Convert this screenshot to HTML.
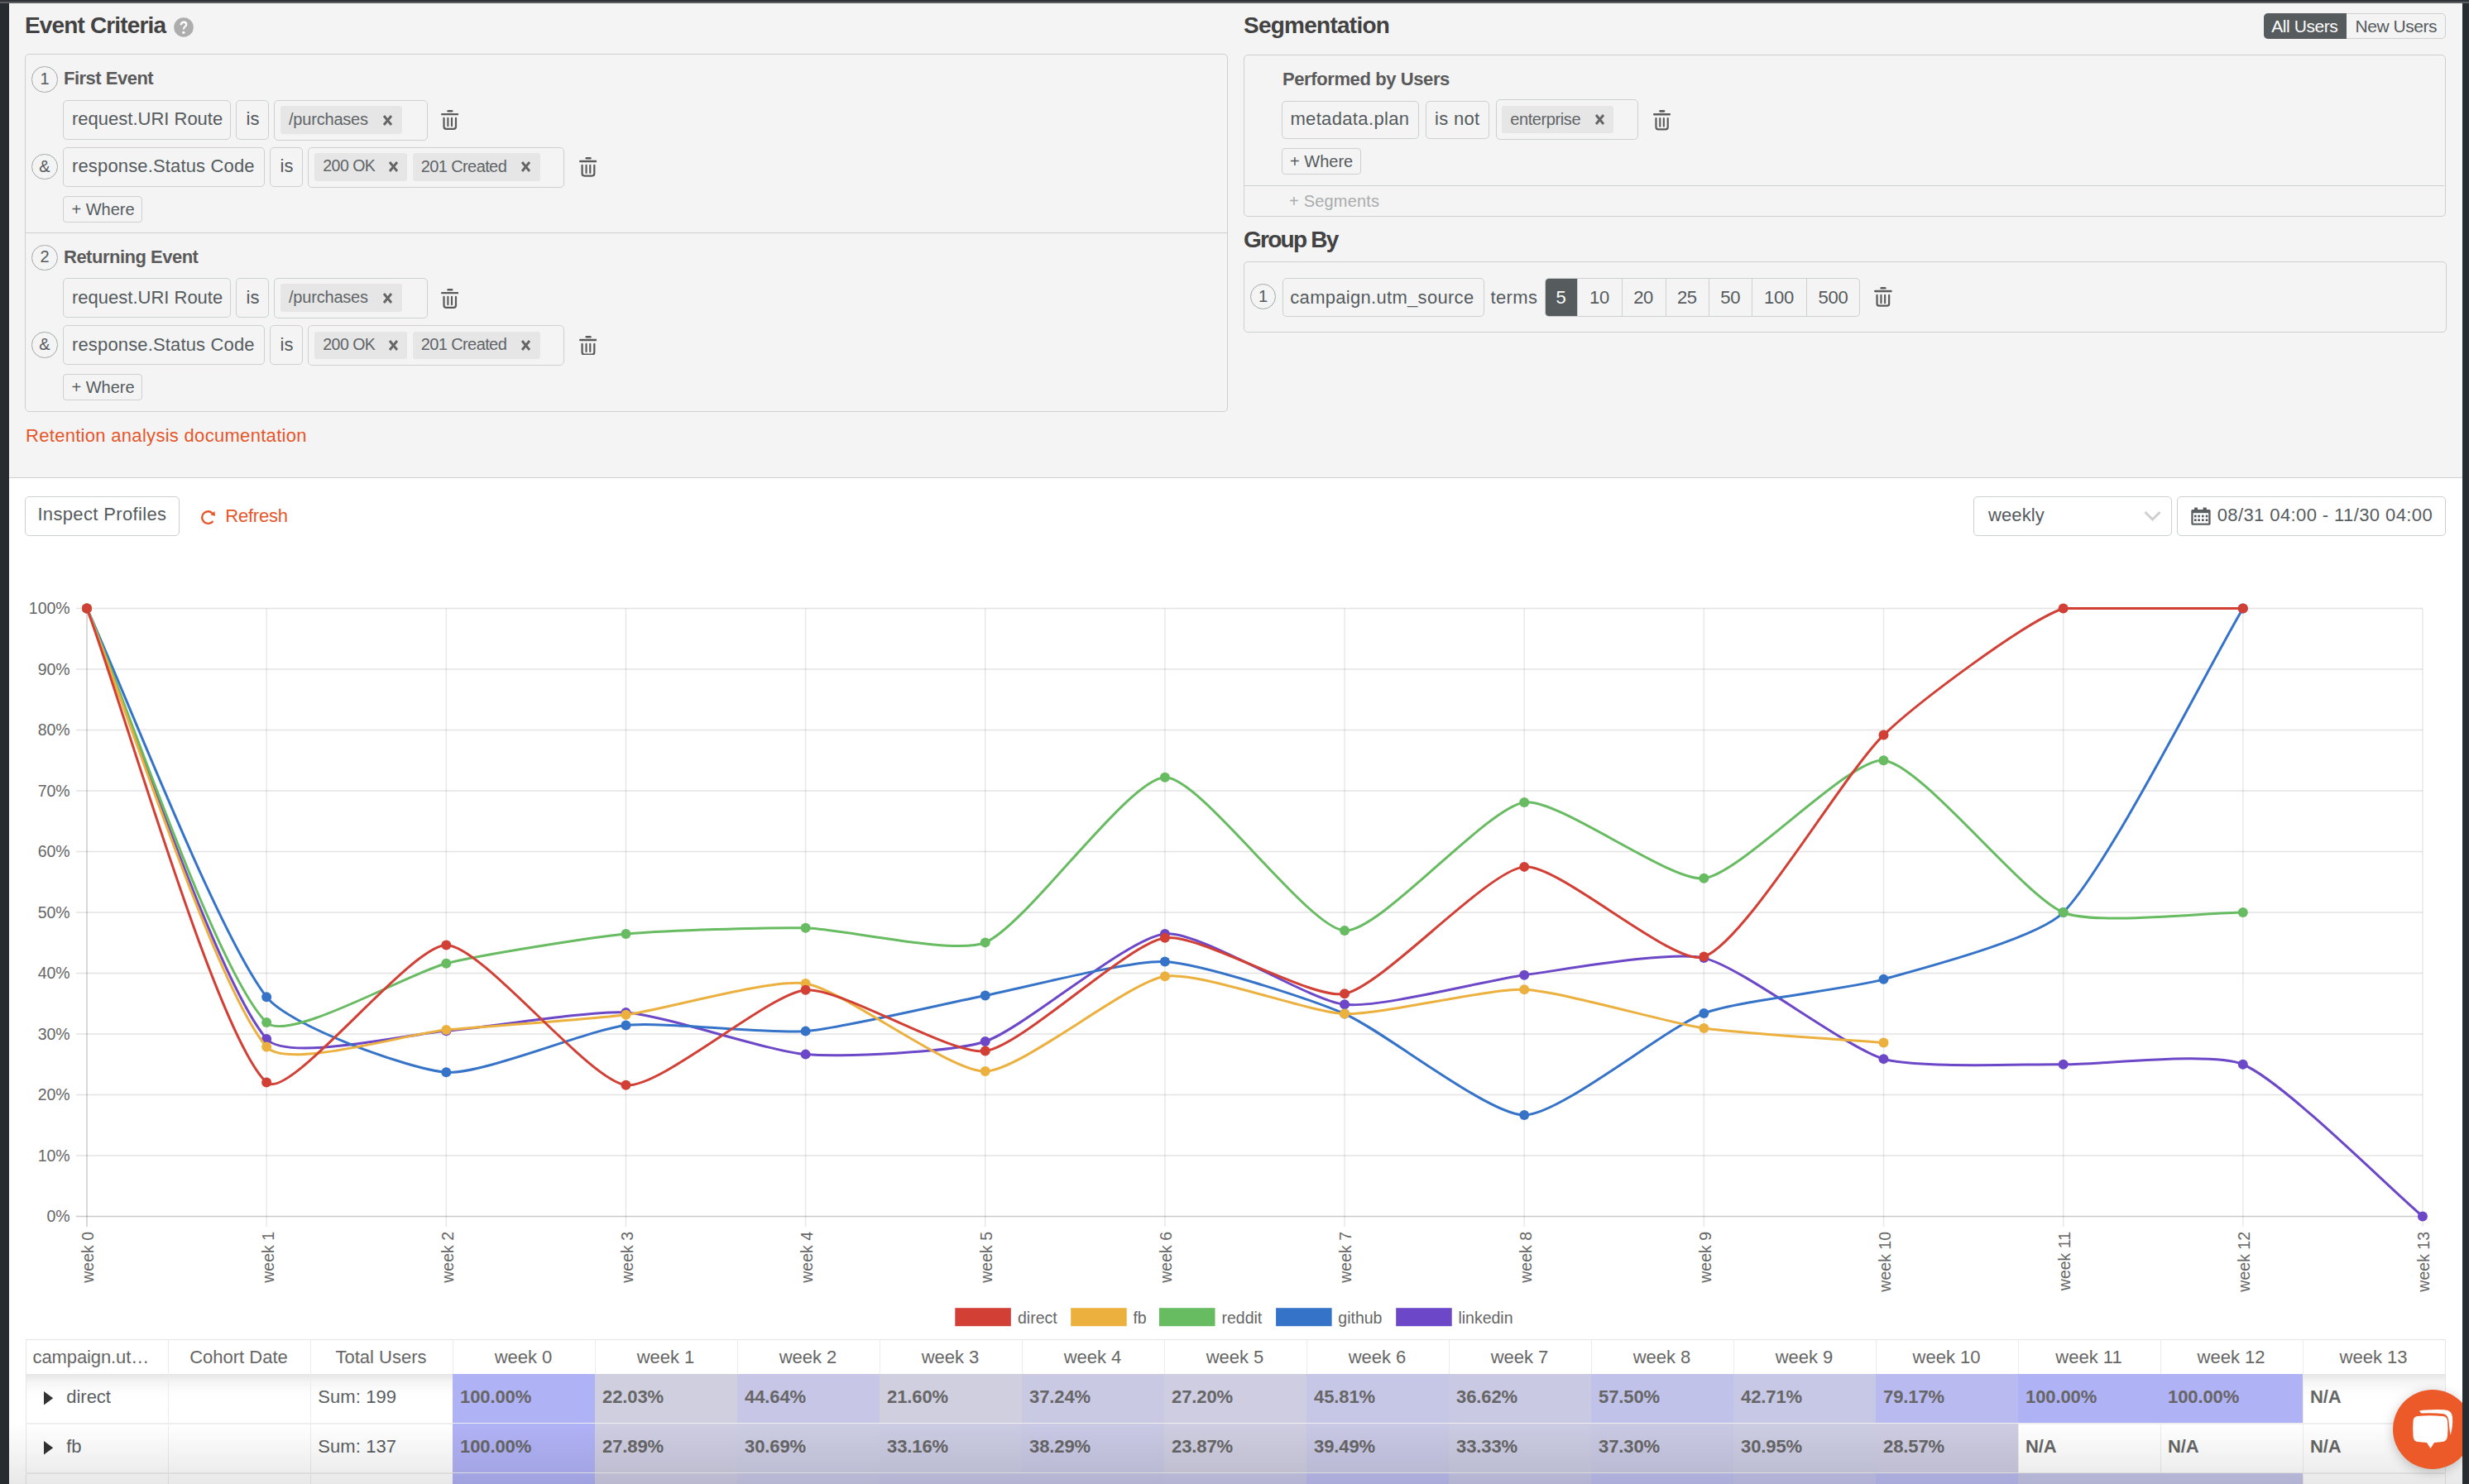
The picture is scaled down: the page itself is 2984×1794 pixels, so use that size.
<!DOCTYPE html>
<html><head><meta charset="utf-8"><title>Retention</title>
<style>
html,body{margin:0;padding:0;width:2984px;height:1794px;overflow:hidden;background:#fff}
body{position:relative;font-family:"Liberation Sans", sans-serif;}
.a{position:absolute;box-sizing:border-box}
.t{position:absolute;white-space:pre;font-family:"Liberation Sans", sans-serif}
</style></head><body>
<div class="a" style="left:0px;top:0px;width:2984px;height:1794px;background:#ffffff;"></div>
<div class="a" style="left:11px;top:4px;width:2965px;height:573px;background:#f4f4f4;"></div>
<div class="a" style="left:11px;top:577px;width:2965px;height:1.2px;background:#cdd1d1;"></div>
<span class="t" style="left:30px;top:17.29px;font-size:28px;line-height:28px;color:#424242;font-weight:700;letter-spacing:-0.85px;">Event Criteria</span>
<svg class="a" style="left:210px;top:20.5px" width="24" height="24" viewBox="0 0 24 24"><circle cx="12" cy="12" r="11.8" fill="#adadad"/><path d="M7.6 9.2 Q7.8 4.6 12.2 4.6 Q16.4 4.6 16.4 8.4 Q16.4 10.4 14.4 11.8 Q13 12.8 13 14.6 L10.9 14.6 Q10.8 12.2 12.6 10.8 Q14 9.8 14 8.5 Q14 6.9 12.1 6.9 Q10.2 6.9 10 9.2 Z" fill="#fff"/><circle cx="11.9" cy="18.3" r="1.6" fill="#fff"/></svg>
<div class="a" style="left:30px;top:65px;width:1454px;height:432.5px;border:1px solid #ccd0d0;border-radius:5px;"></div>
<div class="a" style="left:31px;top:281px;width:1452px;height:1.2px;background:#ccd0d0;"></div>
<div class="a" style="left:38.25px;top:80.25px;width:31.5px;height:31.5px;border:1px solid #a3a8aa;border-radius:15.75px;"></div>
<span class="t" style="left:54px;top:85.07px;font-size:20px;line-height:20px;color:#555b5e;transform:translateX(-50%);">1</span>
<span class="t" style="left:77px;top:84.37px;font-size:22px;line-height:22px;color:#5a5a5a;font-weight:700;letter-spacing:-0.5px;">First Event</span>
<div class="a" style="left:76px;top:121px;width:203px;height:48px;border:1px solid #ccd0d0;border-radius:5px;"></div>
<span class="t" style="left:87px;top:133.37px;font-size:22px;line-height:22px;color:#555b5e;">request.URI Route</span>
<div class="a" style="left:285px;top:121px;width:40px;height:48px;border:1px solid #ccd0d0;border-radius:5px;"></div>
<span class="t" style="left:297.5px;top:133.37px;font-size:22px;line-height:22px;color:#555b5e;">is</span>
<div class="a" style="left:331px;top:120.5px;width:186px;height:49px;border:1px solid #ccd0d0;border-radius:5px;"></div>
<div class="a" style="left:339px;top:128px;width:147px;height:33.5px;background:#e6e6e6;border-radius:3px;"></div>
<span class="t" style="left:349px;top:134.07px;font-size:20px;line-height:20px;color:#5f6467;letter-spacing:-0.2px;">/purchases</span>
<svg class="a" style="left:460.5px;top:136.5px" width="15" height="17"><path d="M3 3 L12 14 M12 3 L3 14" stroke="#666666" stroke-width="2.9" stroke-linecap="butt"/></svg>
<svg class="a" style="left:532.7px;top:133.4px" width="21.5" height="24" viewBox="0 0 21.4 24.1" preserveAspectRatio="none"><rect x="7.3" y="0" width="7.1" height="2.6" rx="1.3" fill="#5b5b5b"/><rect x="0" y="3.9" width="21.4" height="2.5" rx="1.25" fill="#5b5b5b"/><path d="M3.5 9.9 V20.2 Q3.5 23 6.3 23 H15.1 Q17.9 23 17.9 20.2 V9.9" fill="none" stroke="#5b5b5b" stroke-width="2.2" stroke-linecap="round"/><path d="M8.35 9.9 V19.4 M12.95 9.9 V19.4" fill="none" stroke="#5b5b5b" stroke-width="2.1" stroke-linecap="round"/></svg>
<div class="a" style="left:38.25px;top:185.95px;width:31.5px;height:31.5px;border:1px solid #a3a8aa;border-radius:15.75px;"></div>
<span class="t" style="left:54px;top:190.77px;font-size:20px;line-height:20px;color:#555b5e;transform:translateX(-50%);">&</span>
<div class="a" style="left:76px;top:178px;width:243.5px;height:47.5px;border:1px solid #ccd0d0;border-radius:5px;"></div>
<span class="t" style="left:87px;top:190.37px;font-size:22px;line-height:22px;color:#555b5e;letter-spacing:0.15px;">response.Status Code</span>
<div class="a" style="left:326.4px;top:178px;width:39.2px;height:47.5px;border:1px solid #ccd0d0;border-radius:5px;"></div>
<span class="t" style="left:338.6px;top:190.37px;font-size:22px;line-height:22px;color:#555b5e;">is</span>
<div class="a" style="left:372.4px;top:177.5px;width:310px;height:49px;border:1px solid #ccd0d0;border-radius:5px;"></div>
<div class="a" style="left:380.2px;top:185.3px;width:111.5px;height:33.5px;background:#e6e6e6;border-radius:3px;"></div>
<span class="t" style="left:390.2px;top:191.49px;font-size:19.5px;line-height:19.5px;color:#5f6467;letter-spacing:-0.5px;">200 OK</span>
<svg class="a" style="left:467.5px;top:193.3px" width="15" height="17"><path d="M3 3 L12 14 M12 3 L3 14" stroke="#666666" stroke-width="2.9" stroke-linecap="butt"/></svg>
<div class="a" style="left:499.2px;top:185.3px;width:153.4px;height:33.5px;background:#e6e6e6;border-radius:3px;"></div>
<span class="t" style="left:508.7px;top:191.07px;font-size:20px;line-height:20px;color:#5f6467;letter-spacing:-0.6px;">201 Created</span>
<svg class="a" style="left:627.8px;top:193.3px" width="15" height="17"><path d="M3 3 L12 14 M12 3 L3 14" stroke="#666666" stroke-width="2.9" stroke-linecap="butt"/></svg>
<svg class="a" style="left:699.5px;top:190.2px" width="21.9" height="23.7" viewBox="0 0 21.4 24.1" preserveAspectRatio="none"><rect x="7.3" y="0" width="7.1" height="2.6" rx="1.3" fill="#5b5b5b"/><rect x="0" y="3.9" width="21.4" height="2.5" rx="1.25" fill="#5b5b5b"/><path d="M3.5 9.9 V20.2 Q3.5 23 6.3 23 H15.1 Q17.9 23 17.9 20.2 V9.9" fill="none" stroke="#5b5b5b" stroke-width="2.2" stroke-linecap="round"/><path d="M8.35 9.9 V19.4 M12.95 9.9 V19.4" fill="none" stroke="#5b5b5b" stroke-width="2.1" stroke-linecap="round"/></svg>
<div class="a" style="left:76px;top:236.5px;width:96px;height:32px;border:1px solid #ccd0d0;border-radius:4px;"></div>
<span class="t" style="left:86.4px;top:242.57px;font-size:20px;line-height:20px;color:#555b5e;">+ Where</span>
<div class="a" style="left:38.25px;top:295.65px;width:31.5px;height:31.5px;border:1px solid #a3a8aa;border-radius:15.75px;"></div>
<span class="t" style="left:54px;top:300.47px;font-size:20px;line-height:20px;color:#555b5e;transform:translateX(-50%);">2</span>
<span class="t" style="left:77px;top:299.77px;font-size:22px;line-height:22px;color:#5a5a5a;font-weight:700;letter-spacing:-0.5px;">Returning Event</span>
<div class="a" style="left:76px;top:336.4px;width:203px;height:48px;border:1px solid #ccd0d0;border-radius:5px;"></div>
<span class="t" style="left:87px;top:348.77px;font-size:22px;line-height:22px;color:#555b5e;">request.URI Route</span>
<div class="a" style="left:285px;top:336.4px;width:40px;height:48px;border:1px solid #ccd0d0;border-radius:5px;"></div>
<span class="t" style="left:297.5px;top:348.77px;font-size:22px;line-height:22px;color:#555b5e;">is</span>
<div class="a" style="left:331px;top:335.9px;width:186px;height:49px;border:1px solid #ccd0d0;border-radius:5px;"></div>
<div class="a" style="left:339px;top:343.4px;width:147px;height:33.5px;background:#e6e6e6;border-radius:3px;"></div>
<span class="t" style="left:349px;top:349.47px;font-size:20px;line-height:20px;color:#5f6467;letter-spacing:-0.2px;">/purchases</span>
<svg class="a" style="left:460.5px;top:351.9px" width="15" height="17"><path d="M3 3 L12 14 M12 3 L3 14" stroke="#666666" stroke-width="2.9" stroke-linecap="butt"/></svg>
<svg class="a" style="left:532.7px;top:348.8px" width="21.5" height="24" viewBox="0 0 21.4 24.1" preserveAspectRatio="none"><rect x="7.3" y="0" width="7.1" height="2.6" rx="1.3" fill="#5b5b5b"/><rect x="0" y="3.9" width="21.4" height="2.5" rx="1.25" fill="#5b5b5b"/><path d="M3.5 9.9 V20.2 Q3.5 23 6.3 23 H15.1 Q17.9 23 17.9 20.2 V9.9" fill="none" stroke="#5b5b5b" stroke-width="2.2" stroke-linecap="round"/><path d="M8.35 9.9 V19.4 M12.95 9.9 V19.4" fill="none" stroke="#5b5b5b" stroke-width="2.1" stroke-linecap="round"/></svg>
<div class="a" style="left:38.25px;top:401.35px;width:31.5px;height:31.5px;border:1px solid #a3a8aa;border-radius:15.75px;"></div>
<span class="t" style="left:54px;top:406.17px;font-size:20px;line-height:20px;color:#555b5e;transform:translateX(-50%);">&</span>
<div class="a" style="left:76px;top:393.4px;width:243.5px;height:47.5px;border:1px solid #ccd0d0;border-radius:5px;"></div>
<span class="t" style="left:87px;top:405.77px;font-size:22px;line-height:22px;color:#555b5e;letter-spacing:0.15px;">response.Status Code</span>
<div class="a" style="left:326.4px;top:393.4px;width:39.2px;height:47.5px;border:1px solid #ccd0d0;border-radius:5px;"></div>
<span class="t" style="left:338.6px;top:405.77px;font-size:22px;line-height:22px;color:#555b5e;">is</span>
<div class="a" style="left:372.4px;top:392.9px;width:310px;height:49px;border:1px solid #ccd0d0;border-radius:5px;"></div>
<div class="a" style="left:380.2px;top:400.7px;width:111.5px;height:33.5px;background:#e6e6e6;border-radius:3px;"></div>
<span class="t" style="left:390.2px;top:406.89px;font-size:19.5px;line-height:19.5px;color:#5f6467;letter-spacing:-0.5px;">200 OK</span>
<svg class="a" style="left:467.5px;top:408.7px" width="15" height="17"><path d="M3 3 L12 14 M12 3 L3 14" stroke="#666666" stroke-width="2.9" stroke-linecap="butt"/></svg>
<div class="a" style="left:499.2px;top:400.7px;width:153.4px;height:33.5px;background:#e6e6e6;border-radius:3px;"></div>
<span class="t" style="left:508.7px;top:406.47px;font-size:20px;line-height:20px;color:#5f6467;letter-spacing:-0.6px;">201 Created</span>
<svg class="a" style="left:627.8px;top:408.7px" width="15" height="17"><path d="M3 3 L12 14 M12 3 L3 14" stroke="#666666" stroke-width="2.9" stroke-linecap="butt"/></svg>
<svg class="a" style="left:699.5px;top:405.6px" width="21.9" height="23.7" viewBox="0 0 21.4 24.1" preserveAspectRatio="none"><rect x="7.3" y="0" width="7.1" height="2.6" rx="1.3" fill="#5b5b5b"/><rect x="0" y="3.9" width="21.4" height="2.5" rx="1.25" fill="#5b5b5b"/><path d="M3.5 9.9 V20.2 Q3.5 23 6.3 23 H15.1 Q17.9 23 17.9 20.2 V9.9" fill="none" stroke="#5b5b5b" stroke-width="2.2" stroke-linecap="round"/><path d="M8.35 9.9 V19.4 M12.95 9.9 V19.4" fill="none" stroke="#5b5b5b" stroke-width="2.1" stroke-linecap="round"/></svg>
<div class="a" style="left:76px;top:451.9px;width:96px;height:32px;border:1px solid #ccd0d0;border-radius:4px;"></div>
<span class="t" style="left:86.4px;top:457.97px;font-size:20px;line-height:20px;color:#555b5e;">+ Where</span>
<span class="t" style="left:31px;top:516.37px;font-size:22px;line-height:22px;color:#e6562b;letter-spacing:0.3px;">Retention analysis documentation</span>
<span class="t" style="left:1503px;top:17.29px;font-size:28px;line-height:28px;color:#424242;font-weight:700;letter-spacing:-0.75px;">Segmentation</span>
<div class="a" style="left:2736px;top:15.8px;width:219.5px;height:31.4px;border:1px solid #ccd0d0;border-radius:5px;"></div>
<div class="a" style="left:2736px;top:15.8px;width:100px;height:31.4px;background:#565b5e;border-radius:5px 0 0 5px;"></div>
<span class="t" style="left:2745.3px;top:20.62px;font-size:21px;line-height:21px;color:#ffffff;letter-spacing:-0.45px;">All Users</span>
<span class="t" style="left:2846.5px;top:20.62px;font-size:21px;line-height:21px;color:#555b5e;letter-spacing:-0.45px;">New Users</span>
<div class="a" style="left:1503.3px;top:65.5px;width:1453.2px;height:196.5px;border:1px solid #ccd0d0;border-radius:5px;"></div>
<span class="t" style="left:1550px;top:84.67px;font-size:22px;line-height:22px;color:#5a5a5a;font-weight:700;letter-spacing:-0.4px;">Performed by Users</span>
<div class="a" style="left:1549.4px;top:121.5px;width:165.8px;height:46.7px;border:1px solid #ccd0d0;border-radius:5px;"></div>
<span class="t" style="left:1559.4px;top:133.37px;font-size:22px;line-height:22px;color:#555b5e;letter-spacing:0.35px;">metadata.plan</span>
<div class="a" style="left:1722.5px;top:121.5px;width:77px;height:46.7px;border:1px solid #ccd0d0;border-radius:5px;"></div>
<span class="t" style="left:1734.1px;top:133.37px;font-size:22px;line-height:22px;color:#555b5e;letter-spacing:0.3px;">is not</span>
<div class="a" style="left:1807.5px;top:120.3px;width:172.5px;height:49px;border:1px solid #ccd0d0;border-radius:5px;"></div>
<div class="a" style="left:1815.3px;top:128.3px;width:135px;height:33px;background:#e6e6e6;border-radius:3px;"></div>
<span class="t" style="left:1825.2px;top:134.07px;font-size:20px;line-height:20px;color:#5f6467;letter-spacing:-0.4px;">enterprise</span>
<svg class="a" style="left:1925.5px;top:136.3px" width="15" height="17"><path d="M3 3 L12 14 M12 3 L3 14" stroke="#666666" stroke-width="2.9" stroke-linecap="butt"/></svg>
<svg class="a" style="left:1997.8px;top:133px" width="21.2" height="24.5" viewBox="0 0 21.4 24.1" preserveAspectRatio="none"><rect x="7.3" y="0" width="7.1" height="2.6" rx="1.3" fill="#5b5b5b"/><rect x="0" y="3.9" width="21.4" height="2.5" rx="1.25" fill="#5b5b5b"/><path d="M3.5 9.9 V20.2 Q3.5 23 6.3 23 H15.1 Q17.9 23 17.9 20.2 V9.9" fill="none" stroke="#5b5b5b" stroke-width="2.2" stroke-linecap="round"/><path d="M8.35 9.9 V19.4 M12.95 9.9 V19.4" fill="none" stroke="#5b5b5b" stroke-width="2.1" stroke-linecap="round"/></svg>
<div class="a" style="left:1549.4px;top:179.3px;width:95.3px;height:32.1px;border:1px solid #ccd0d0;border-radius:4px;"></div>
<span class="t" style="left:1559.1px;top:185.07px;font-size:20px;line-height:20px;color:#555b5e;">+ Where</span>
<div class="a" style="left:1504.3px;top:224px;width:1450px;height:1.2px;background:#ccd0d0;"></div>
<span class="t" style="left:1558px;top:233.37px;font-size:20px;line-height:20px;color:#a9acad;letter-spacing:0.2px;">+ Segments</span>
<span class="t" style="left:1503px;top:276.29px;font-size:28px;line-height:28px;color:#424242;font-weight:700;letter-spacing:-1.75px;">Group By</span>
<div class="a" style="left:1503px;top:316px;width:1453.5px;height:86px;border:1px solid #ccd0d0;border-radius:5px;"></div>
<div class="a" style="left:1510.85px;top:342.95px;width:31.5px;height:31.5px;border:1px solid #a3a8aa;border-radius:15.75px;"></div>
<span class="t" style="left:1526.6px;top:347.77px;font-size:20px;line-height:20px;color:#555b5e;transform:translateX(-50%);">1</span>
<div class="a" style="left:1549.8px;top:335.5px;width:244.2px;height:47.7px;border:1px solid #ccd0d0;border-radius:5px;"></div>
<span class="t" style="left:1559.3px;top:348.57px;font-size:22px;line-height:22px;color:#555b5e;letter-spacing:0.3px;">campaign.utm_source</span>
<span class="t" style="left:1801.5px;top:348.57px;font-size:22px;line-height:22px;color:#555b5e;letter-spacing:0.35px;">terms</span>
<div class="a" style="left:1866.9px;top:335.5px;width:381.4px;height:47.7px;border:1px solid #ccd0d0;border-radius:5px;"></div>
<div class="a" style="left:1867.9px;top:336.5px;width:38.4px;height:45.7px;background:#565b5e;border-radius:4px 0 0 4px;"></div>
<span class="t" style="left:1886.6px;top:348.57px;font-size:22px;line-height:22px;color:#ffffff;transform:translateX(-50%);">5</span>
<div class="a" style="left:1906.3px;top:336.5px;width:1.2px;height:45.7px;background:#ccd0d0;"></div>
<span class="t" style="left:1933px;top:348.57px;font-size:22px;line-height:22px;color:#555b5e;letter-spacing:-0.3px;transform:translateX(-50%);">10</span>
<div class="a" style="left:1959.7px;top:336.5px;width:1.2px;height:45.7px;background:#ccd0d0;"></div>
<span class="t" style="left:1986.1px;top:348.57px;font-size:22px;line-height:22px;color:#555b5e;letter-spacing:-0.3px;transform:translateX(-50%);">20</span>
<div class="a" style="left:2012.5px;top:336.5px;width:1.2px;height:45.7px;background:#ccd0d0;"></div>
<span class="t" style="left:2038.85px;top:348.57px;font-size:22px;line-height:22px;color:#555b5e;letter-spacing:-0.3px;transform:translateX(-50%);">25</span>
<div class="a" style="left:2065.2px;top:336.5px;width:1.2px;height:45.7px;background:#ccd0d0;"></div>
<span class="t" style="left:2091.25px;top:348.57px;font-size:22px;line-height:22px;color:#555b5e;letter-spacing:-0.3px;transform:translateX(-50%);">50</span>
<div class="a" style="left:2117.3px;top:336.5px;width:1.2px;height:45.7px;background:#ccd0d0;"></div>
<span class="t" style="left:2149.95px;top:348.57px;font-size:22px;line-height:22px;color:#555b5e;letter-spacing:-0.3px;transform:translateX(-50%);">100</span>
<div class="a" style="left:2182.6px;top:336.5px;width:1.2px;height:45.7px;background:#ccd0d0;"></div>
<span class="t" style="left:2215.45px;top:348.57px;font-size:22px;line-height:22px;color:#555b5e;letter-spacing:-0.3px;transform:translateX(-50%);">500</span>
<svg class="a" style="left:2265.3px;top:346.8px" width="21.7" height="23.8" viewBox="0 0 21.4 24.1" preserveAspectRatio="none"><rect x="7.3" y="0" width="7.1" height="2.6" rx="1.3" fill="#5b5b5b"/><rect x="0" y="3.9" width="21.4" height="2.5" rx="1.25" fill="#5b5b5b"/><path d="M3.5 9.9 V20.2 Q3.5 23 6.3 23 H15.1 Q17.9 23 17.9 20.2 V9.9" fill="none" stroke="#5b5b5b" stroke-width="2.2" stroke-linecap="round"/><path d="M8.35 9.9 V19.4 M12.95 9.9 V19.4" fill="none" stroke="#5b5b5b" stroke-width="2.1" stroke-linecap="round"/></svg>
<div class="a" style="left:30.3px;top:599.5px;width:186.3px;height:48px;border:1px solid #ccd0d0;border-radius:5px;background:#fff;"></div>
<span class="t" style="left:45.4px;top:611.37px;font-size:22px;line-height:22px;color:#555b5e;letter-spacing:0.35px;">Inspect Profiles</span>
<svg class="a" style="left:238px;top:610px" width="28" height="30" viewBox="0 0 28 30"><path d="M18.93 10.72 A7.3 7.3 0 1 0 19.33 19.99" fill="none" stroke="#e6562b" stroke-width="2.4"/><path d="M21.4 8.1 L22.1 13.8 L16.4 12.6 Z" fill="#e6562b"/></svg>
<span class="t" style="left:272.2px;top:612.87px;font-size:22px;line-height:22px;color:#e6562b;letter-spacing:-0.2px;">Refresh</span>
<div class="a" style="left:2385.3px;top:599.5px;width:239.3px;height:48px;border:1px solid #ccd0d0;border-radius:5px;background:#fff;"></div>
<span class="t" style="left:2403px;top:611.87px;font-size:22px;line-height:22px;color:#555b5e;letter-spacing:0.1px;">weekly</span>
<svg class="a" style="left:2591px;top:617px" width="21" height="14"><path d="M1.5 2 L10.5 11 L19.5 2" fill="none" stroke="#cfcfcf" stroke-width="3"/></svg>
<div class="a" style="left:2631.2px;top:599.5px;width:324.4px;height:48px;border:1px solid #ccd0d0;border-radius:5px;background:#fff;"></div>
<svg class="a" style="left:2648px;top:612.5px" width="24" height="23" viewBox="0 0 24 23"><rect x="0.3" y="2.9" width="23.3" height="18.8" rx="1.6" fill="#5a5f62"/><rect x="4.1" y="0.5" width="3.9" height="4" rx="0.6" fill="#5a5f62"/><rect x="14.6" y="0.5" width="4.2" height="4" rx="0.6" fill="#5a5f62"/><rect x="2.6" y="7.2" width="18.6" height="12.4" fill="#fff"/><rect x="4.0" y="9.7" width="2.6" height="2.6" fill="#4f5457"/><rect x="8.3" y="9.7" width="2.6" height="2.6" fill="#4f5457"/><rect x="13.0" y="9.7" width="2.6" height="2.6" fill="#4f5457"/><rect x="17.7" y="9.7" width="2.6" height="2.6" fill="#4f5457"/><rect x="4.0" y="14.4" width="2.6" height="2.6" fill="#4f5457"/><rect x="8.3" y="14.4" width="2.6" height="2.6" fill="#4f5457"/><rect x="13.0" y="14.4" width="2.6" height="2.6" fill="#4f5457"/><rect x="17.7" y="14.4" width="2.6" height="2.6" fill="#4f5457"/></svg>
<span class="t" style="left:2679.7px;top:611.87px;font-size:22px;line-height:22px;color:#555b5e;letter-spacing:0.4px;">08/31 04:00 - 11/30 04:00</span>
<svg class="a" style="left:0;top:0" width="2984" height="1794"><rect x="92" y="734.7" width="2836" height="1.6" fill="rgba(0,0,0,0.105)"/><rect x="92" y="808.2" width="2836" height="1.6" fill="rgba(0,0,0,0.105)"/><rect x="92" y="881.7" width="2836" height="1.6" fill="rgba(0,0,0,0.105)"/><rect x="92" y="955.2" width="2836" height="1.6" fill="rgba(0,0,0,0.105)"/><rect x="92" y="1028.7" width="2836" height="1.6" fill="rgba(0,0,0,0.105)"/><rect x="92" y="1102.2" width="2836" height="1.6" fill="rgba(0,0,0,0.105)"/><rect x="92" y="1175.7" width="2836" height="1.6" fill="rgba(0,0,0,0.105)"/><rect x="92" y="1249.2" width="2836" height="1.6" fill="rgba(0,0,0,0.105)"/><rect x="92" y="1322.7" width="2836" height="1.6" fill="rgba(0,0,0,0.105)"/><rect x="92" y="1396.2" width="2836" height="1.6" fill="rgba(0,0,0,0.105)"/><rect x="92" y="1469.7" width="2836" height="1.6" fill="rgba(0,0,0,0.2)"/><rect x="104.25" y="735.5" width="1.5" height="747.5" fill="rgba(0,0,0,0.2)"/><rect x="321.4" y="735.5" width="1.5" height="747.5" fill="rgba(0,0,0,0.09)"/><rect x="538.55" y="735.5" width="1.5" height="747.5" fill="rgba(0,0,0,0.09)"/><rect x="755.7" y="735.5" width="1.5" height="747.5" fill="rgba(0,0,0,0.09)"/><rect x="972.85" y="735.5" width="1.5" height="747.5" fill="rgba(0,0,0,0.09)"/><rect x="1190" y="735.5" width="1.5" height="747.5" fill="rgba(0,0,0,0.09)"/><rect x="1407.15" y="735.5" width="1.5" height="747.5" fill="rgba(0,0,0,0.09)"/><rect x="1624.3" y="735.5" width="1.5" height="747.5" fill="rgba(0,0,0,0.09)"/><rect x="1841.45" y="735.5" width="1.5" height="747.5" fill="rgba(0,0,0,0.09)"/><rect x="2058.6" y="735.5" width="1.5" height="747.5" fill="rgba(0,0,0,0.09)"/><rect x="2275.75" y="735.5" width="1.5" height="747.5" fill="rgba(0,0,0,0.09)"/><rect x="2492.9" y="735.5" width="1.5" height="747.5" fill="rgba(0,0,0,0.09)"/><rect x="2710.05" y="735.5" width="1.5" height="747.5" fill="rgba(0,0,0,0.09)"/><rect x="2927.2" y="735.5" width="1.5" height="747.5" fill="rgba(0,0,0,0.09)"/><text x="84.7" y="742.3" text-anchor="end" font-size="19.5" fill="#666" font-family='"Liberation Sans", sans-serif'>100%</text><text x="84.7" y="815.8" text-anchor="end" font-size="19.5" fill="#666" font-family='"Liberation Sans", sans-serif'>90%</text><text x="84.7" y="889.3" text-anchor="end" font-size="19.5" fill="#666" font-family='"Liberation Sans", sans-serif'>80%</text><text x="84.7" y="962.8" text-anchor="end" font-size="19.5" fill="#666" font-family='"Liberation Sans", sans-serif'>70%</text><text x="84.7" y="1036.3" text-anchor="end" font-size="19.5" fill="#666" font-family='"Liberation Sans", sans-serif'>60%</text><text x="84.7" y="1109.8" text-anchor="end" font-size="19.5" fill="#666" font-family='"Liberation Sans", sans-serif'>50%</text><text x="84.7" y="1183.3" text-anchor="end" font-size="19.5" fill="#666" font-family='"Liberation Sans", sans-serif'>40%</text><text x="84.7" y="1256.8" text-anchor="end" font-size="19.5" fill="#666" font-family='"Liberation Sans", sans-serif'>30%</text><text x="84.7" y="1330.3" text-anchor="end" font-size="19.5" fill="#666" font-family='"Liberation Sans", sans-serif'>20%</text><text x="84.7" y="1403.8" text-anchor="end" font-size="19.5" fill="#666" font-family='"Liberation Sans", sans-serif'>10%</text><text x="84.7" y="1477.3" text-anchor="end" font-size="19.5" fill="#666" font-family='"Liberation Sans", sans-serif'>0%</text><text transform="translate(113.4,1489) rotate(-90)" text-anchor="end" font-size="19.5" fill="#666" font-family='"Liberation Sans", sans-serif'>week 0</text><text transform="translate(330.55,1489) rotate(-90)" text-anchor="end" font-size="19.5" fill="#666" font-family='"Liberation Sans", sans-serif'>week 1</text><text transform="translate(547.7,1489) rotate(-90)" text-anchor="end" font-size="19.5" fill="#666" font-family='"Liberation Sans", sans-serif'>week 2</text><text transform="translate(764.85,1489) rotate(-90)" text-anchor="end" font-size="19.5" fill="#666" font-family='"Liberation Sans", sans-serif'>week 3</text><text transform="translate(982,1489) rotate(-90)" text-anchor="end" font-size="19.5" fill="#666" font-family='"Liberation Sans", sans-serif'>week 4</text><text transform="translate(1199.15,1489) rotate(-90)" text-anchor="end" font-size="19.5" fill="#666" font-family='"Liberation Sans", sans-serif'>week 5</text><text transform="translate(1416.3,1489) rotate(-90)" text-anchor="end" font-size="19.5" fill="#666" font-family='"Liberation Sans", sans-serif'>week 6</text><text transform="translate(1633.45,1489) rotate(-90)" text-anchor="end" font-size="19.5" fill="#666" font-family='"Liberation Sans", sans-serif'>week 7</text><text transform="translate(1850.6,1489) rotate(-90)" text-anchor="end" font-size="19.5" fill="#666" font-family='"Liberation Sans", sans-serif'>week 8</text><text transform="translate(2067.75,1489) rotate(-90)" text-anchor="end" font-size="19.5" fill="#666" font-family='"Liberation Sans", sans-serif'>week 9</text><text transform="translate(2284.9,1489) rotate(-90)" text-anchor="end" font-size="19.5" fill="#666" font-family='"Liberation Sans", sans-serif'>week 10</text><text transform="translate(2502.05,1489) rotate(-90)" text-anchor="end" font-size="19.5" fill="#666" font-family='"Liberation Sans", sans-serif'>week 11</text><text transform="translate(2719.2,1489) rotate(-90)" text-anchor="end" font-size="19.5" fill="#666" font-family='"Liberation Sans", sans-serif'>week 12</text><text transform="translate(2936.35,1489) rotate(-90)" text-anchor="end" font-size="19.5" fill="#666" font-family='"Liberation Sans", sans-serif'>week 13</text><path d="M105 735.5 C148.43 839.58 259.46 1182.14 322.15 1255.88 C346.32 1284.31 495.96 1249.52 539.3 1246.33 C582.82 1243.12 713.48 1221.11 756.45 1223.91 C800.34 1226.77 929.65 1271.07 973.6 1274.62 C1016.51 1278.09 1150.58 1272.44 1190.75 1258.97 C1237.44 1243.3 1362.71 1133.59 1407.9 1128.95 C1449.57 1124.67 1580.35 1209.23 1625.05 1214.35 C1667.21 1219.18 1798.58 1184.35 1842.2 1178.7 C1885.44 1173.11 2018.8 1148.65 2059.35 1158.12 C2105.66 1168.94 2230.11 1266.39 2276.5 1280.13 C2316.97 1292.12 2450.21 1286.09 2493.65 1286.75 C2537.07 1287.41 2673.2 1270.84 2710.8 1286.75 C2760.06 1307.59 2884.52 1433.75 2927.95 1470.5" fill="none" stroke="#6c47c8" stroke-width="3"/><circle cx="105" cy="735.5" r="6" fill="#6c47c8"/><circle cx="322.15" cy="1255.88" r="6" fill="#6c47c8"/><circle cx="539.3" cy="1246.33" r="6" fill="#6c47c8"/><circle cx="756.45" cy="1223.91" r="6" fill="#6c47c8"/><circle cx="973.6" cy="1274.62" r="6" fill="#6c47c8"/><circle cx="1190.75" cy="1258.97" r="6" fill="#6c47c8"/><circle cx="1407.9" cy="1128.95" r="6" fill="#6c47c8"/><circle cx="1625.05" cy="1214.35" r="6" fill="#6c47c8"/><circle cx="1842.2" cy="1178.7" r="6" fill="#6c47c8"/><circle cx="2059.35" cy="1158.12" r="6" fill="#6c47c8"/><circle cx="2276.5" cy="1280.13" r="6" fill="#6c47c8"/><circle cx="2493.65" cy="1286.75" r="6" fill="#6c47c8"/><circle cx="2710.8" cy="1286.75" r="6" fill="#6c47c8"/><circle cx="2927.95" cy="1470.5" r="6" fill="#6c47c8"/><path d="M105 735.5 C148.43 829.43 262.46 1128.09 322.15 1205.16 C349.32 1240.25 494.83 1292.79 539.3 1296.31 C581.69 1299.66 712.31 1244.54 756.45 1239.49 C799.17 1234.6 930.58 1250.19 973.6 1246.62 C1017.44 1242.98 1147.28 1211.89 1190.75 1203.47 C1234.14 1195.07 1364.97 1160.36 1407.9 1162.54 C1451.83 1164.77 1583.74 1207.89 1625.05 1225.52 C1670.6 1244.97 1798.79 1348.03 1842.2 1347.98 C1885.65 1347.92 2013.29 1242.42 2059.35 1225.01 C2100.15 1209.59 2234.1 1195.76 2276.5 1183.85 C2320.96 1171.36 2463.09 1134.55 2493.65 1103 C2549.95 1044.88 2667.37 809 2710.8 735.5" fill="none" stroke="#3573c9" stroke-width="3"/><circle cx="105" cy="735.5" r="6" fill="#3573c9"/><circle cx="322.15" cy="1205.16" r="6" fill="#3573c9"/><circle cx="539.3" cy="1296.31" r="6" fill="#3573c9"/><circle cx="756.45" cy="1239.49" r="6" fill="#3573c9"/><circle cx="973.6" cy="1246.62" r="6" fill="#3573c9"/><circle cx="1190.75" cy="1203.47" r="6" fill="#3573c9"/><circle cx="1407.9" cy="1162.54" r="6" fill="#3573c9"/><circle cx="1625.05" cy="1225.52" r="6" fill="#3573c9"/><circle cx="1842.2" cy="1347.98" r="6" fill="#3573c9"/><circle cx="2059.35" cy="1225.01" r="6" fill="#3573c9"/><circle cx="2276.5" cy="1183.85" r="6" fill="#3573c9"/><circle cx="2493.65" cy="1103" r="6" fill="#3573c9"/><circle cx="2710.8" cy="735.5" r="6" fill="#3573c9"/><path d="M105 735.5 C148.43 835.61 260.93 1175.53 322.15 1236.04 C347.79 1261.38 495.05 1175.64 539.3 1164.74 C581.91 1154.25 712.74 1133.41 756.45 1129.09 C799.6 1124.83 930.23 1120.79 973.6 1121.82 C1017.09 1122.85 1153.85 1154.85 1190.75 1139.38 C1240.71 1118.45 1363.76 941.29 1407.9 939.83 C1450.62 938.42 1580.16 1121.94 1625.05 1125.05 C1667.02 1127.96 1796.09 976.68 1842.2 969.97 C1882.95 964.03 2018.02 1066.67 2059.35 1061.84 C2104.88 1056.52 2235.04 915.32 2276.5 919.25 C2321.9 923.55 2444.39 1082.16 2493.65 1103 C2531.25 1118.91 2667.37 1103 2710.8 1103" fill="none" stroke="#67bb61" stroke-width="3"/><circle cx="105" cy="735.5" r="6" fill="#67bb61"/><circle cx="322.15" cy="1236.04" r="6" fill="#67bb61"/><circle cx="539.3" cy="1164.74" r="6" fill="#67bb61"/><circle cx="756.45" cy="1129.09" r="6" fill="#67bb61"/><circle cx="973.6" cy="1121.82" r="6" fill="#67bb61"/><circle cx="1190.75" cy="1139.38" r="6" fill="#67bb61"/><circle cx="1407.9" cy="939.83" r="6" fill="#67bb61"/><circle cx="1625.05" cy="1125.05" r="6" fill="#67bb61"/><circle cx="1842.2" cy="969.97" r="6" fill="#67bb61"/><circle cx="2059.35" cy="1061.84" r="6" fill="#67bb61"/><circle cx="2276.5" cy="919.25" r="6" fill="#67bb61"/><circle cx="2493.65" cy="1103" r="6" fill="#67bb61"/><circle cx="2710.8" cy="1103" r="6" fill="#67bb61"/><path d="M105 735.5 C148.43 841.5 259.25 1191.72 322.15 1265.51 C346.11 1293.61 495.85 1248.8 539.3 1244.93 C582.71 1241.06 713.27 1232.33 756.45 1226.77 C800.13 1221.16 932.17 1182.55 973.6 1189.07 C1019.03 1196.21 1147.68 1295.93 1190.75 1295.06 C1234.54 1294.17 1362.26 1187.56 1407.9 1180.25 C1449.12 1173.65 1581.35 1223.9 1625.05 1225.52 C1668.21 1227.12 1799.07 1194.61 1842.2 1196.35 C1885.93 1198.11 2015.5 1236.54 2059.35 1243.02 C2102.36 1249.37 2233.07 1257.01 2276.5 1260.51" fill="none" stroke="#ecb03f" stroke-width="3"/><circle cx="105" cy="735.5" r="6" fill="#ecb03f"/><circle cx="322.15" cy="1265.51" r="6" fill="#ecb03f"/><circle cx="539.3" cy="1244.93" r="6" fill="#ecb03f"/><circle cx="756.45" cy="1226.77" r="6" fill="#ecb03f"/><circle cx="973.6" cy="1189.07" r="6" fill="#ecb03f"/><circle cx="1190.75" cy="1295.06" r="6" fill="#ecb03f"/><circle cx="1407.9" cy="1180.25" r="6" fill="#ecb03f"/><circle cx="1625.05" cy="1225.52" r="6" fill="#ecb03f"/><circle cx="1842.2" cy="1196.35" r="6" fill="#ecb03f"/><circle cx="2059.35" cy="1243.02" r="6" fill="#ecb03f"/><circle cx="2276.5" cy="1260.51" r="6" fill="#ecb03f"/><path d="M105 735.5 C148.43 850.12 262.09 1252.31 322.15 1308.58 C348.95 1333.69 496.02 1142.08 539.3 1142.4 C582.88 1142.71 710.55 1305.99 756.45 1311.74 C797.41 1316.87 928.67 1201.04 973.6 1196.79 C1015.53 1192.81 1149.76 1276.53 1190.75 1270.58 C1236.62 1263.93 1361.85 1141.14 1407.9 1133.8 C1448.71 1127.29 1585.01 1209.26 1625.05 1201.34 C1671.87 1192.08 1796.8 1052.55 1842.2 1047.88 C1883.66 1043.6 2023.46 1169.74 2059.35 1156.58 C2110.32 1137.89 2227.44 936.17 2276.5 888.6 C2314.3 851.96 2445.85 752.35 2493.65 735.5 C2532.71 735.5 2667.37 735.5 2710.8 735.5" fill="none" stroke="#d13f35" stroke-width="3"/><circle cx="105" cy="735.5" r="6" fill="#d13f35"/><circle cx="322.15" cy="1308.58" r="6" fill="#d13f35"/><circle cx="539.3" cy="1142.4" r="6" fill="#d13f35"/><circle cx="756.45" cy="1311.74" r="6" fill="#d13f35"/><circle cx="973.6" cy="1196.79" r="6" fill="#d13f35"/><circle cx="1190.75" cy="1270.58" r="6" fill="#d13f35"/><circle cx="1407.9" cy="1133.8" r="6" fill="#d13f35"/><circle cx="1625.05" cy="1201.34" r="6" fill="#d13f35"/><circle cx="1842.2" cy="1047.88" r="6" fill="#d13f35"/><circle cx="2059.35" cy="1156.58" r="6" fill="#d13f35"/><circle cx="2276.5" cy="888.6" r="6" fill="#d13f35"/><circle cx="2493.65" cy="735.5" r="6" fill="#d13f35"/><circle cx="2710.8" cy="735.5" r="6" fill="#d13f35"/><rect x="1154.3" y="1581.2" width="67.5" height="22" fill="#d13f35"/><text x="1230" y="1600" font-size="19.5" fill="#666" font-family='"Liberation Sans", sans-serif'>direct</text><rect x="1294.2" y="1581.2" width="67.5" height="22" fill="#ecb03f"/><text x="1369.4" y="1600" font-size="19.5" fill="#666" font-family='"Liberation Sans", sans-serif'>fb</text><rect x="1401" y="1581.2" width="67.5" height="22" fill="#67bb61"/><text x="1476.5" y="1600" font-size="19.5" fill="#666" font-family='"Liberation Sans", sans-serif'>reddit</text><rect x="1542.1" y="1581.2" width="67.5" height="22" fill="#3573c9"/><text x="1617.3" y="1600" font-size="19.5" fill="#666" font-family='"Liberation Sans", sans-serif'>github</text><rect x="1687.2" y="1581.2" width="67.5" height="22" fill="#6c47c8"/><text x="1762.4" y="1600" font-size="19.5" fill="#666" font-family='"Liberation Sans", sans-serif'>linkedin</text></svg>
<div class="a" style="left:30.5px;top:1618.5px;width:2925px;height:176px;background:#fff;"></div>
<div class="a" style="left:30.5px;top:1661px;width:2925px;height:32px;background:linear-gradient(rgba(0,0,0,0.10),rgba(0,0,0,0.04) 30%,rgba(0,0,0,0.01) 65%,rgba(0,0,0,0));"></div>
<div class="a" style="left:30.5px;top:1618.5px;width:2925px;height:200px;border:1px solid #e6e6e6;"></div>
<div class="a" style="left:202.5px;top:1618.5px;width:1.2px;height:176px;background:#ececec;"></div>
<div class="a" style="left:374.5px;top:1618.5px;width:1.2px;height:176px;background:#ececec;"></div>
<div class="a" style="left:546.5px;top:1618.5px;width:1.2px;height:176px;background:#ececec;"></div>
<div class="a" style="left:718.5px;top:1618.5px;width:1.2px;height:176px;background:#ececec;"></div>
<div class="a" style="left:890.5px;top:1618.5px;width:1.2px;height:176px;background:#ececec;"></div>
<div class="a" style="left:1062.5px;top:1618.5px;width:1.2px;height:176px;background:#ececec;"></div>
<div class="a" style="left:1234.5px;top:1618.5px;width:1.2px;height:176px;background:#ececec;"></div>
<div class="a" style="left:1406.5px;top:1618.5px;width:1.2px;height:176px;background:#ececec;"></div>
<div class="a" style="left:1578.5px;top:1618.5px;width:1.2px;height:176px;background:#ececec;"></div>
<div class="a" style="left:1750.5px;top:1618.5px;width:1.2px;height:176px;background:#ececec;"></div>
<div class="a" style="left:1922.5px;top:1618.5px;width:1.2px;height:176px;background:#ececec;"></div>
<div class="a" style="left:2094.5px;top:1618.5px;width:1.2px;height:176px;background:#ececec;"></div>
<div class="a" style="left:2266.5px;top:1618.5px;width:1.2px;height:176px;background:#ececec;"></div>
<div class="a" style="left:2438.5px;top:1618.5px;width:1.2px;height:176px;background:#ececec;"></div>
<div class="a" style="left:2610.5px;top:1618.5px;width:1.2px;height:176px;background:#ececec;"></div>
<div class="a" style="left:2782.5px;top:1618.5px;width:1.2px;height:176px;background:#ececec;"></div>
<span class="t" style="left:39.5px;top:1629.87px;font-size:22px;line-height:22px;color:#666;letter-spacing:-0.1px;">campaign.ut…</span>
<span class="t" style="left:288.5px;top:1629.87px;font-size:22px;line-height:22px;color:#666;transform:translateX(-50%);">Cohort Date</span>
<span class="t" style="left:460.5px;top:1629.87px;font-size:22px;line-height:22px;color:#666;transform:translateX(-50%);">Total Users</span>
<span class="t" style="left:632.5px;top:1629.87px;font-size:22px;line-height:22px;color:#666;transform:translateX(-50%);">week 0</span>
<span class="t" style="left:804.5px;top:1629.87px;font-size:22px;line-height:22px;color:#666;transform:translateX(-50%);">week 1</span>
<span class="t" style="left:976.5px;top:1629.87px;font-size:22px;line-height:22px;color:#666;transform:translateX(-50%);">week 2</span>
<span class="t" style="left:1148.5px;top:1629.87px;font-size:22px;line-height:22px;color:#666;transform:translateX(-50%);">week 3</span>
<span class="t" style="left:1320.5px;top:1629.87px;font-size:22px;line-height:22px;color:#666;transform:translateX(-50%);">week 4</span>
<span class="t" style="left:1492.5px;top:1629.87px;font-size:22px;line-height:22px;color:#666;transform:translateX(-50%);">week 5</span>
<span class="t" style="left:1664.5px;top:1629.87px;font-size:22px;line-height:22px;color:#666;transform:translateX(-50%);">week 6</span>
<span class="t" style="left:1836.5px;top:1629.87px;font-size:22px;line-height:22px;color:#666;transform:translateX(-50%);">week 7</span>
<span class="t" style="left:2008.5px;top:1629.87px;font-size:22px;line-height:22px;color:#666;transform:translateX(-50%);">week 8</span>
<span class="t" style="left:2180.5px;top:1629.87px;font-size:22px;line-height:22px;color:#666;transform:translateX(-50%);">week 9</span>
<span class="t" style="left:2352.5px;top:1629.87px;font-size:22px;line-height:22px;color:#666;transform:translateX(-50%);">week 10</span>
<span class="t" style="left:2524.5px;top:1629.87px;font-size:22px;line-height:22px;color:#666;transform:translateX(-50%);">week 11</span>
<span class="t" style="left:2696.5px;top:1629.87px;font-size:22px;line-height:22px;color:#666;transform:translateX(-50%);">week 12</span>
<span class="t" style="left:2868.5px;top:1629.87px;font-size:22px;line-height:22px;color:#666;transform:translateX(-50%);">week 13</span>
<div class="a" style="left:546.5px;top:1661px;width:172.5px;height:59px;background:#b0b2f6;"></div>
<span class="t" style="left:556px;top:1678.37px;font-size:22px;line-height:22px;color:#666;font-weight:700;letter-spacing:-0.1px;">100.00%</span>
<div class="a" style="left:718.5px;top:1661px;width:172.5px;height:59px;background:#d0cfe0;"></div>
<span class="t" style="left:728px;top:1678.37px;font-size:22px;line-height:22px;color:#666;font-weight:700;letter-spacing:-0.1px;">22.03%</span>
<div class="a" style="left:890.5px;top:1661px;width:172.5px;height:59px;background:#c7c6e6;"></div>
<span class="t" style="left:900px;top:1678.37px;font-size:22px;line-height:22px;color:#666;font-weight:700;letter-spacing:-0.1px;">44.64%</span>
<div class="a" style="left:1062.5px;top:1661px;width:172.5px;height:59px;background:#d0cfe0;"></div>
<span class="t" style="left:1072px;top:1678.37px;font-size:22px;line-height:22px;color:#666;font-weight:700;letter-spacing:-0.1px;">21.60%</span>
<div class="a" style="left:1234.5px;top:1661px;width:172.5px;height:59px;background:#cac9e4;"></div>
<span class="t" style="left:1244px;top:1678.37px;font-size:22px;line-height:22px;color:#666;font-weight:700;letter-spacing:-0.1px;">37.24%</span>
<div class="a" style="left:1406.5px;top:1661px;width:172.5px;height:59px;background:#cecde2;"></div>
<span class="t" style="left:1416px;top:1678.37px;font-size:22px;line-height:22px;color:#666;font-weight:700;letter-spacing:-0.1px;">27.20%</span>
<div class="a" style="left:1578.5px;top:1661px;width:172.5px;height:59px;background:#c6c6e7;"></div>
<span class="t" style="left:1588px;top:1678.37px;font-size:22px;line-height:22px;color:#666;font-weight:700;letter-spacing:-0.1px;">45.81%</span>
<div class="a" style="left:1750.5px;top:1661px;width:172.5px;height:59px;background:#cac9e4;"></div>
<span class="t" style="left:1760px;top:1678.37px;font-size:22px;line-height:22px;color:#666;font-weight:700;letter-spacing:-0.1px;">36.62%</span>
<div class="a" style="left:1922.5px;top:1661px;width:172.5px;height:59px;background:#c1c2ea;"></div>
<span class="t" style="left:1932px;top:1678.37px;font-size:22px;line-height:22px;color:#666;font-weight:700;letter-spacing:-0.1px;">57.50%</span>
<div class="a" style="left:2094.5px;top:1661px;width:172.5px;height:59px;background:#c7c7e6;"></div>
<span class="t" style="left:2104px;top:1678.37px;font-size:22px;line-height:22px;color:#666;font-weight:700;letter-spacing:-0.1px;">42.71%</span>
<div class="a" style="left:2266.5px;top:1661px;width:172.5px;height:59px;background:#b9baf0;"></div>
<span class="t" style="left:2276px;top:1678.37px;font-size:22px;line-height:22px;color:#666;font-weight:700;letter-spacing:-0.1px;">79.17%</span>
<div class="a" style="left:2438.5px;top:1661px;width:172.5px;height:59px;background:#b0b2f6;"></div>
<span class="t" style="left:2448px;top:1678.37px;font-size:22px;line-height:22px;color:#666;font-weight:700;letter-spacing:-0.1px;">100.00%</span>
<div class="a" style="left:2610.5px;top:1661px;width:172.5px;height:59px;background:#b0b2f6;"></div>
<span class="t" style="left:2620px;top:1678.37px;font-size:22px;line-height:22px;color:#666;font-weight:700;letter-spacing:-0.1px;">100.00%</span>
<span class="t" style="left:2792px;top:1678.37px;font-size:22px;line-height:22px;color:#666;font-weight:700;letter-spacing:-0.1px;">N/A</span>
<div class="a" style="left:30.5px;top:1720px;width:2925px;height:2px;background:#eeeeee;"></div>
<svg class="a" style="left:53px;top:1682px" width="12" height="17"><path d="M0 0 L11.2 8.2 L0 16.4 Z" fill="#333"/></svg>
<span class="t" style="left:80.2px;top:1678.37px;font-size:22px;line-height:22px;color:#5b5f62;">direct</span>
<span class="t" style="left:384.2px;top:1678.37px;font-size:22px;line-height:22px;color:#5b5f62;letter-spacing:0.1px;">Sum: 199</span>
<div class="a" style="left:546.5px;top:1721px;width:172.5px;height:59px;background:#b0b2f6;"></div>
<span class="t" style="left:556px;top:1738.37px;font-size:22px;line-height:22px;color:#666;font-weight:700;letter-spacing:-0.1px;">100.00%</span>
<div class="a" style="left:718.5px;top:1721px;width:172.5px;height:59px;background:#cecde2;"></div>
<span class="t" style="left:728px;top:1738.37px;font-size:22px;line-height:22px;color:#666;font-weight:700;letter-spacing:-0.1px;">27.89%</span>
<div class="a" style="left:890.5px;top:1721px;width:172.5px;height:59px;background:#cccce3;"></div>
<span class="t" style="left:900px;top:1738.37px;font-size:22px;line-height:22px;color:#666;font-weight:700;letter-spacing:-0.1px;">30.69%</span>
<div class="a" style="left:1062.5px;top:1721px;width:172.5px;height:59px;background:#cbcbe3;"></div>
<span class="t" style="left:1072px;top:1738.37px;font-size:22px;line-height:22px;color:#666;font-weight:700;letter-spacing:-0.1px;">33.16%</span>
<div class="a" style="left:1234.5px;top:1721px;width:172.5px;height:59px;background:#c9c9e5;"></div>
<span class="t" style="left:1244px;top:1738.37px;font-size:22px;line-height:22px;color:#666;font-weight:700;letter-spacing:-0.1px;">38.29%</span>
<div class="a" style="left:1406.5px;top:1721px;width:172.5px;height:59px;background:#cfcee1;"></div>
<span class="t" style="left:1416px;top:1738.37px;font-size:22px;line-height:22px;color:#666;font-weight:700;letter-spacing:-0.1px;">23.87%</span>
<div class="a" style="left:1578.5px;top:1721px;width:172.5px;height:59px;background:#c9c8e5;"></div>
<span class="t" style="left:1588px;top:1738.37px;font-size:22px;line-height:22px;color:#666;font-weight:700;letter-spacing:-0.1px;">39.49%</span>
<div class="a" style="left:1750.5px;top:1721px;width:172.5px;height:59px;background:#cbcbe3;"></div>
<span class="t" style="left:1760px;top:1738.37px;font-size:22px;line-height:22px;color:#666;font-weight:700;letter-spacing:-0.1px;">33.33%</span>
<div class="a" style="left:1922.5px;top:1721px;width:172.5px;height:59px;background:#cac9e4;"></div>
<span class="t" style="left:1932px;top:1738.37px;font-size:22px;line-height:22px;color:#666;font-weight:700;letter-spacing:-0.1px;">37.30%</span>
<div class="a" style="left:2094.5px;top:1721px;width:172.5px;height:59px;background:#cccce3;"></div>
<span class="t" style="left:2104px;top:1738.37px;font-size:22px;line-height:22px;color:#666;font-weight:700;letter-spacing:-0.1px;">30.95%</span>
<div class="a" style="left:2266.5px;top:1721px;width:172.5px;height:59px;background:#cdcce2;"></div>
<span class="t" style="left:2276px;top:1738.37px;font-size:22px;line-height:22px;color:#666;font-weight:700;letter-spacing:-0.1px;">28.57%</span>
<span class="t" style="left:2448px;top:1738.37px;font-size:22px;line-height:22px;color:#666;font-weight:700;letter-spacing:-0.1px;">N/A</span>
<span class="t" style="left:2620px;top:1738.37px;font-size:22px;line-height:22px;color:#666;font-weight:700;letter-spacing:-0.1px;">N/A</span>
<span class="t" style="left:2792px;top:1738.37px;font-size:22px;line-height:22px;color:#666;font-weight:700;letter-spacing:-0.1px;">N/A</span>
<div class="a" style="left:30.5px;top:1780px;width:2925px;height:2px;background:#eeeeee;"></div>
<svg class="a" style="left:53px;top:1742px" width="12" height="17"><path d="M0 0 L11.2 8.2 L0 16.4 Z" fill="#333"/></svg>
<span class="t" style="left:80.2px;top:1738.37px;font-size:22px;line-height:22px;color:#5b5f62;">fb</span>
<span class="t" style="left:384.2px;top:1738.37px;font-size:22px;line-height:22px;color:#5b5f62;letter-spacing:0.1px;">Sum: 137</span>
<div class="a" style="left:546.5px;top:1781px;width:172.5px;height:59px;background:#b0b2f6;"></div>
<div class="a" style="left:718.5px;top:1781px;width:172.5px;height:59px;background:#cccbe3;"></div>
<div class="a" style="left:890.5px;top:1781px;width:172.5px;height:59px;background:#c8c8e6;"></div>
<div class="a" style="left:1062.5px;top:1781px;width:172.5px;height:59px;background:#c6c6e7;"></div>
<div class="a" style="left:1234.5px;top:1781px;width:172.5px;height:59px;background:#c6c5e7;"></div>
<div class="a" style="left:1406.5px;top:1781px;width:172.5px;height:59px;background:#c7c6e7;"></div>
<div class="a" style="left:1578.5px;top:1781px;width:172.5px;height:59px;background:#bbbcee;"></div>
<div class="a" style="left:1750.5px;top:1781px;width:172.5px;height:59px;background:#c6c6e7;"></div>
<div class="a" style="left:1922.5px;top:1781px;width:172.5px;height:59px;background:#bdbeed;"></div>
<div class="a" style="left:2094.5px;top:1781px;width:172.5px;height:59px;background:#c2c2ea;"></div>
<div class="a" style="left:2266.5px;top:1781px;width:172.5px;height:59px;background:#babbef;"></div>
<div class="a" style="left:2438.5px;top:1781px;width:172.5px;height:59px;background:#c4c4e8;"></div>
<div class="a" style="left:2610.5px;top:1781px;width:172.5px;height:59px;background:#c4c4e8;"></div>
<div class="a" style="left:30.5px;top:1840px;width:2925px;height:2px;background:#eeeeee;"></div>
<div class="a" style="left:11px;top:1720px;width:2965px;height:74px;background:linear-gradient(rgba(0,0,0,0),rgba(0,0,0,0.09));"></div>
<div class="a" style="left:2892px;top:1680px;width:96px;height:96px;border-radius:50%;background:#ec5a2a;box-shadow:0 3px 14px rgba(0,0,0,0.22)"></div>
<svg class="a" style="left:2912px;top:1700px" width="60" height="56" viewBox="0 0 60 56"><path d="M12 5.6 Q22 3.6 42 4.2 Q51.5 4.8 52 13 Q52.8 24 49.6 35 Q48.4 28 47.8 21 Q47.4 10.5 41.5 9.2 Q30 7.8 14.5 8.4 Q12.5 7 12 5.6 Z" fill="#fff"/><path d="M10 12 Q24 10.5 40 12 Q45.5 12.6 46 18 Q47 27 46 36 Q45.5 42 40 43 L30 44 L25.5 51 L21 44 L10 43 Q5.2 42.4 4.6 37 Q3.8 27 4.6 17 Q5.2 12.6 10 12 Z" fill="#fff"/></svg>
<div class="a" style="left:0px;top:0px;width:2984px;height:2px;background:#2f3236;"></div>
<div class="a" style="left:0px;top:2px;width:2984px;height:2px;background:#5a5d61;"></div>
<div class="a" style="left:0px;top:4px;width:11px;height:1790px;background:#272c30;"></div>
<div class="a" style="left:2976px;top:4px;width:8px;height:1790px;background:#272c30;"></div>
</body></html>
